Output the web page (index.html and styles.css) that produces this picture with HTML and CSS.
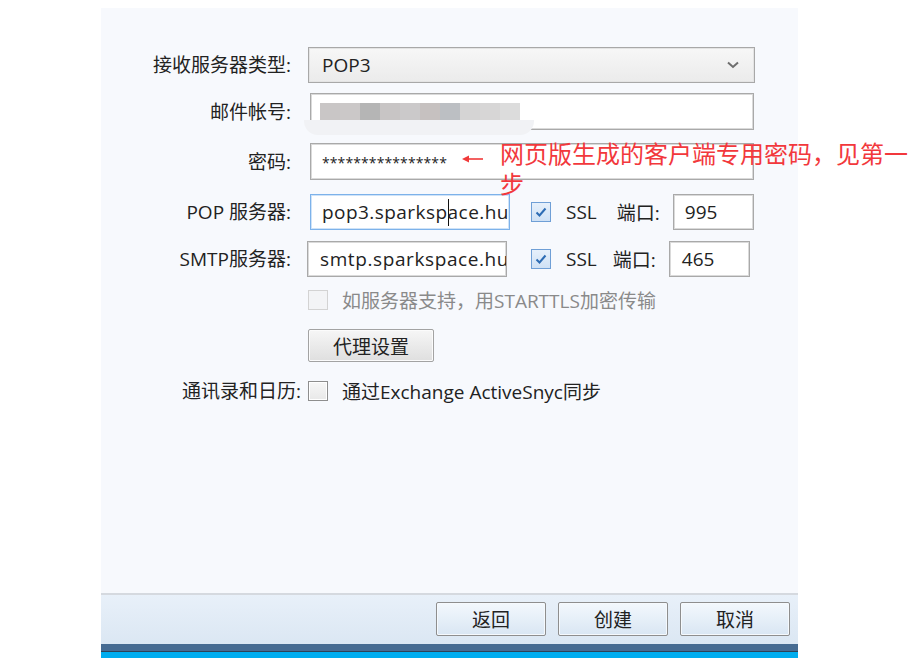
FILE: index.html
```html
<!DOCTYPE html>
<html lang="zh-CN">
<head>
<meta charset="utf-8">
<title>邮箱设置</title>
<link rel="stylesheet" href="styles.css">
</head>
<body>
<div class="panel">
  <div class="form">
    <div class="row r1">
      <div class="lbl">接收服务器类型:</div>
      <div class="select">
        <span class="val">POP3</span>
        <svg class="chev" width="14" height="10" viewBox="0 0 14 10"><path d="M2 2.5 L7 7 L12 2.5" fill="none" stroke="#6e6e6e" stroke-width="2"/></svg>
      </div>
    </div>
    <div class="row r2">
      <div class="lbl">邮件帐号:</div>
      <div class="input wide mail"></div>
    </div>
    <div class="row r3">
      <div class="lbl">密码:</div>
      <div class="input wide pwd">****************</div>
    </div>
    <div class="row r4">
      <div class="lbl">POP 服务器:</div>
      <div class="input host focus">pop3.sparksp<span class="caret"></span>ace.hu</div>
      <span class="cb checked"><svg width="20" height="20" viewBox="0 0 20 20"><path d="M5.5 10.5 L8.5 13.5 L14.5 6.5" fill="none" stroke="#2d6cb4" stroke-width="2"/></svg></span>
      <span class="ssl">SSL</span>
      <span class="port-lbl">端口:</span>
      <div class="input port">995</div>
    </div>
    <div class="row r5">
      <div class="lbl">SMTP服务器:</div>
      <div class="input host smtp">smtp.sparkspace.hu</div>
      <span class="cb checked cb5"><svg width="20" height="20" viewBox="0 0 20 20"><path d="M5.5 10.5 L8.5 13.5 L14.5 6.5" fill="none" stroke="#2d6cb4" stroke-width="2"/></svg></span>
      <span class="ssl">SSL</span>
      <span class="port-lbl pl5">端口:</span>
      <div class="input port port5">465</div>
    </div>
    <div class="row r6">
      <div class="lbl"></div>
      <span class="cb disabled"></span>
      <span class="opt dim">如服务器支持，用STARTTLS加密传输</span>
    </div>
    <div class="row r7">
      <div class="lbl"></div>
      <button class="btn proxy">代理设置</button>
    </div>
    <div class="row r8">
      <div class="lbl wide-lbl">通讯录和日历:</div>
      <span class="cb plain"></span>
      <span class="opt">通过Exchange ActiveSnyc同步</span>
    </div>
  </div>
  <div class="footer">
    <div class="btnbar">
      <button class="fbtn">返回</button>
      <button class="fbtn">创建</button>
      <button class="fbtn">取消</button>
    </div>
    <div class="stripe-dark"></div>
    <div class="stripe-line"></div>
    <div class="stripe-cyan"></div>
  </div>
</div>

<div class="blur">
  <div class="blocks">
    <i style="background:#c9c6c6"></i><i style="background:#cbc8c8"></i><i style="background:#b5b5b5"></i><i style="background:#c8c5c5"></i><i style="background:#cbc9ca"></i><i style="background:#c6c1c0"></i><i style="background:#bcbfc3"></i><i style="background:#d5d4d4"></i><i style="background:#d7d6d6"></i><i style="background:#dcdcdc"></i>
  </div>
  <div class="smear"></div>
</div>

<svg class="arrow" width="24" height="10" viewBox="0 0 24 10"><path d="M6 5 H22" stroke="#f03a3a" stroke-width="1.6"/><path d="M1 5 L8 1.5 L8 8.5 Z" fill="#f03a3a"/></svg>
<div class="note">网页版生成的客户端专用密码，见第一步</div>
</body>
</html>
```

FILE: styles.css
```css
html, body {
  margin: 0;
  padding: 0;
  background: #ffffff;
}
body {
  padding: 8px 0 0 101px;
  font-family: "Open Sans", "Noto Sans CJK SC", sans-serif;
  color: #222;
  font-size: 19px;
  position: relative;
  height: 650px;
  overflow: hidden;
}
.panel {
  width: 697px;
  height: 650px;
  background: #f7f9fd;
  display: flex;
  flex-direction: column;
}
.form {
  flex: 1;
  padding-top: 39px;
  display: flex;
  flex-direction: column;
}
.row {
  display: flex;
  align-items: center;
}
.lbl {
  width: 190px;
  margin-right: 17px;
  text-align: right;
  white-space: nowrap;
  font-size: 19px;
  line-height: 24px;
  flex: none;
  color: #222;
}
.wide-lbl {
  margin-right: 7px;
  width: 200px;
}
.r1 { height: 36px; }
.r2 { height: 37px; margin-top: 10px; }
.r3 { height: 37px; margin-top: 13px; }
.r4 { height: 36px; margin-top: 14px; }
.r5 { height: 36px; margin-top: 11px; }
.r6 { height: 20px; margin-top: 13px; }
.r7 { height: 33px; margin-top: 19px; }
.r8 { height: 20px; margin-top: 19px; }

.select {
  box-sizing: border-box;
  width: 447px;
  height: 36px;
  border: 1px solid #a8a8a8;
  box-shadow: inset 0 0 0 1px #e4e4e4;
  background: linear-gradient(#f7f7f7, #ebebeb);
  display: flex;
  align-items: center;
  padding: 0 14px 0 13px;
}
.select .val { flex: 1; }
.chev { flex: none; }

.input {
  box-sizing: border-box;
  background: #fff;
  border: 1px solid #a9a9a9;
  box-shadow: inset 0 0 0 1px #dadada;
  height: 100%;
  display: flex;
  align-items: center;
  white-space: nowrap;
  overflow: hidden;
  padding-left: 11px;
  font-size: 19px;
}
.wide {
  width: 444px;
  margin-left: 2px;
}
.pwd {
  font-size: 14px;
  align-items: flex-start;
  padding-top: 9px;
  letter-spacing: 0.1px;
}
.host {
  width: 200px;
  margin-left: 2px;
  letter-spacing: 0.45px;
}
.focus {
  border-color: #7db2ea;
  box-shadow: inset 0 0 0 1px #cfe3f8;
}
.smtp {
  margin-left: -1px;
  padding-left: 12px;
  letter-spacing: 0.6px;
}
.caret {
  display: inline-block;
  width: 1px;
  height: 27px;
  background: #111;
  margin-right: -1px;
}
.cb {
  box-sizing: border-box;
  width: 20px;
  height: 20px;
  flex: none;
  display: inline-block;
}
.cb svg { display: block; }
.checked {
  border: 1px solid #6f9fd6;
  background: linear-gradient(#e6f0fb, #cfe1f5);
  margin-left: 21px;
}
.cb5 { margin-left: 24px; }
.checked svg { margin: -1px; }
.disabled {
  border: 1px solid #d3d3d3;
  background: #f3f4f6;
}
.plain {
  border: 1px solid #8e8e8e;
  background: linear-gradient(#f7f7f7, #e8e8e8);
  box-shadow: inset 0 0 0 1px #fff;
}
.ssl {
  margin-left: 15px;
  font-size: 19px;
}
.port-lbl {
  margin-left: 20px;
  font-size: 19px;
}
.pl5 { margin-left: 16px; }
.port {
  width: 81px;
  margin-left: 13px;
}
.port5 { padding-left: 12px; }
.opt {
  margin-left: 14px;
  font-size: 19px;
  white-space: nowrap;
}
.dim { color: #8a8a8a; }

.btn {
  box-sizing: border-box;
  width: 126px;
  height: 33px;
  border: 1px solid #a3a3a3;
  border-radius: 2px;
  background: linear-gradient(#f6f6f6, #dfdfdf);
  box-shadow: inset 0 0 0 1px #fbfbfb;
  font-family: inherit;
  font-size: 19px;
  color: #222;
  padding: 0;
}

.footer {
  height: 65px;
  flex: none;
  display: flex;
  flex-direction: column;
}
.btnbar {
  border-top: 2px solid #d5d9df;
  background: linear-gradient(#e8f0f9, #dbe7f3);
  display: flex;
  justify-content: flex-end;
  align-items: flex-start;
  gap: 12px;
  padding: 7px 8px 0 0;
  box-sizing: content-box;
  height: 42px;
}
.fbtn {
  box-sizing: border-box;
  width: 110px;
  height: 34px;
  border: 1px solid #8e8e8e;
  border-radius: 2px;
  background: linear-gradient(#f3f8fd, #d9e6f3);
  box-shadow: inset 0 0 0 1px #f5f9fd;
  font-family: inherit;
  font-size: 19px;
  color: #222;
  padding: 0;
}
.stripe-dark { height: 7px; background: #466b92; }
.stripe-line { height: 1px; background: #2f4256; }
.stripe-cyan { height: 6px; background: #00adef; }

.blur {
  position: absolute;
  left: 304px;
  top: 97px;
  width: 232px;
  height: 38px;
}
.blocks {
  display: flex;
  margin: 6px 0 0 16px;
  height: 17px;
}
.blocks i {
  display: block;
  width: 20px;
  height: 17px;
}
.smear {
  height: 15px;
  width: 230px;
  background: #f1f2f5;
  border-radius: 0 0 14px 14px;
}
.arrow {
  position: absolute;
  left: 461px;
  top: 154px;
}
.note {
  position: absolute;
  left: 500px;
  top: 138px;
  width: 420px;
  font-family: "Noto Sans CJK SC", sans-serif;
  font-size: 24px;
  line-height: 30px;
  color: #f2383c;
}
```
